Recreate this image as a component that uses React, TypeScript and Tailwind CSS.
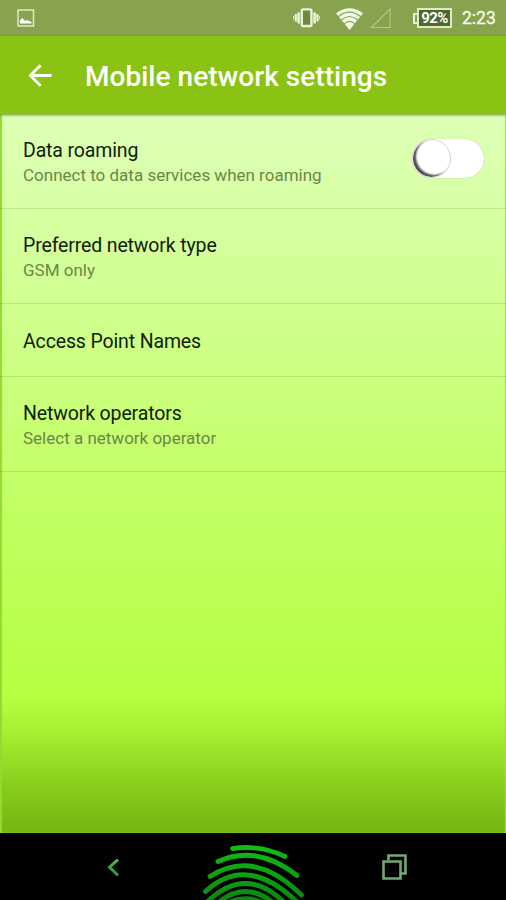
import React from "react";

function StatusBar() {
  return (
    <div className="flex h-9 shrink-0 items-center bg-[#87a34d] pl-[17px] pr-[10px]">
      <svg width="18" height="18" viewBox="0 0 18 18" fill="none">
        <rect x="1" y="1" width="15.5" height="16" stroke="#dfe8c8" strokeWidth="1.5" />
        <path d="M3 14.5V11l2.5-2 2.5 3 2-1 2 1 2.5 1v1.5z" fill="#fff" />
      </svg>
      <div className="flex-1" />
      <svg width="27" height="22" viewBox="0 0 27 22" fill="none" stroke="#e9f1d6">
        <rect x="8.8" y="2.4" width="9.6" height="16.6" rx="1" fill="#71893f" strokeWidth="2.4" />
        <path d="M5.6 5.5v11M21.6 5.5v11" strokeWidth="2.6" />
        <path d="M2.8 7v7.5M24.4 7v7.5" strokeWidth="2.2" />
        <path d="M.7 9v3.5M26.3 9v3.5" strokeWidth="1" />
      </svg>
      <svg className="ml-[16px]" width="27" height="23" viewBox="0 0 27 23" fill="none">
        <path d="M0 6.2Q13.5-3.8 27 6.2L13.5 23z" fill="#f0f6e4" />
        <path d="M2.4 9.6Q13.5.6 24.6 9.6M5.4 13Q13.5 6 21.6 13M8.2 16.8Q13.5 11.8 18.8 16.8" stroke="#87a34d" strokeWidth="1.1" />
      </svg>
      <svg className="ml-[7px]" width="21" height="21" viewBox="0 0 21 21" fill="none">
        <path d="M20 1v18.500H1.500z" stroke="#b3c58b" strokeWidth="1.2" />
      </svg>
      <div className="ml-[22px] flex items-center">
        <span className="h-[11px] w-[4px] border-y-2 border-l-2 border-[#e9f1d6]" />
        <span className="flex h-[20px] w-[35px] items-center justify-center border-2 border-[#e0eaca] bg-[#50682b] text-[15px] font-bold leading-none tracking-[-0.6px] text-white">92%</span>
      </div>
      <span className="ml-[10px] w-[34px] whitespace-nowrap pt-[2px] text-[17.5px] leading-none text-[#f5faeb] [-webkit-text-stroke:0.3px_#f5faeb]">2:23</span>
    </div>
  );
}

function Header() {
  return (
    <header className="relative z-10 flex h-[78px] shrink-0 items-center bg-[#8ac314] pl-[28px] pt-[2px] shadow-[0_1px_3px_rgba(60,90,10,0.65)]">
      <svg width="24" height="24" viewBox="0 0 24 24" fill="none" stroke="#fff" strokeWidth="2.8">
        <path d="M23.5 11.500H2.500M12.600 1.300L2.300 11.500l10.300 10.200" />
      </svg>
      <h1 className="ml-[33px] whitespace-nowrap pt-[2px] text-[28px] font-medium leading-8 tracking-[0.03px] text-white">Mobile network settings</h1>
    </header>
  );
}

type RowProps = { title: string; sub?: string; height: string; children?: React.ReactNode };

function Row({ title, sub, height, children }: RowProps) {
  return (
    <div className={`flex shrink-0 items-center justify-between border-b border-[#54802a]/20 pl-[23px] pr-[22px] ${height}`}>
      <div className="whitespace-nowrap pt-[3px]">
        <div className="text-[19.5px] leading-[25px] tracking-[-0.14px] text-[#10200a]">{title}</div>
        {sub && <div className="text-[17px] leading-[24px] text-[#6b8748]">{sub}</div>}
      </div>
      {children}
    </div>
  );
}

function Toggle() {
  return (
    <div className="mb-[5px] flex h-[39px] w-[72px] items-center rounded-full bg-white shadow-[0_0_1px_#9baf80]">
      <div className="size-[39px] rounded-full border border-[#d4d4d4] bg-white shadow-[inset_3px_-2px_2px_#4d4d4d]" />
    </div>
  );
}

function NavBar() {
  return (
    <nav className="flex h-[67px] shrink-0 bg-black">
      <svg width="506" height="67" viewBox="0 833 506 67" fill="none">
        <defs>
          <linearGradient id="print" x1="0" y1="845" x2="0" y2="900" gradientUnits="userSpaceOnUse">
            <stop stopColor="#12bd12" />
            <stop offset="1" stopColor="#0b8712" />
          </linearGradient>
          <linearGradient id="back" x1="0" y1="858" x2="0" y2="877" gradientUnits="userSpaceOnUse">
            <stop stopColor="#62b95d" />
            <stop offset=".5" stopColor="#31a832" />
            <stop offset="1" stopColor="#497f53" />
          </linearGradient>
        </defs>
        <path d="M118 859.5l-8.5 7.8 8.5 8" stroke="url(#back)" strokeWidth="3" />
        <g stroke="url(#print)" strokeWidth="4.8" strokeLinecap="round">
          <path d="M232.500 848.500Q260 844.500 285 856.500" />
          <path d="M218 861.500Q257 844 297 875.500" />
          <path d="M210 876.500Q254 848 301.500 895" />
          <path d="M205.500 891.500Q247 853 298 903" />
          <path d="M207 902Q246 864 286 904" />
          <path d="M219 902Q246 880 275 904" />
          <path d="M230 902Q246 895 264 903" />
        </g>
        <g stroke="#72a875" strokeWidth="2.6">
          <path d="M388.500 860V855.500H405.500V873.500H401" />
          <path d="M383.500 861.500h17v17h-17z" />
        </g>
      </svg>
    </nav>
  );
}

export default function App() {
  return (
    <div className="flex h-[900px] w-[506px] flex-col overflow-hidden bg-black font-['Roboto',sans-serif]">
      <StatusBar />
      <Header />
      <main className="flex h-[719px] shrink-0 flex-col bg-[linear-gradient(to_bottom,#deffb8_0%,#d1ff91_26%,#c5ff6b_49%,#b5ff42_81%,#a6ef32_86%,#86cb1b_94%,#73b513_100%)] shadow-[inset_2px_0_1px_#94da32,inset_-1px_0_1px_#a1da50]">
        <Row title="Data roaming" sub="Connect to data services when roaming" height="h-[95px]">
          <Toggle />
        </Row>
        <Row title="Preferred network type" sub="GSM only" height="h-[95px]" />
        <Row title="Access Point Names" height="h-[73px]" />
        <Row title="Network operators" sub="Select a network operator" height="h-[95px]" />
      </main>
      <NavBar />
    </div>
  );
}
